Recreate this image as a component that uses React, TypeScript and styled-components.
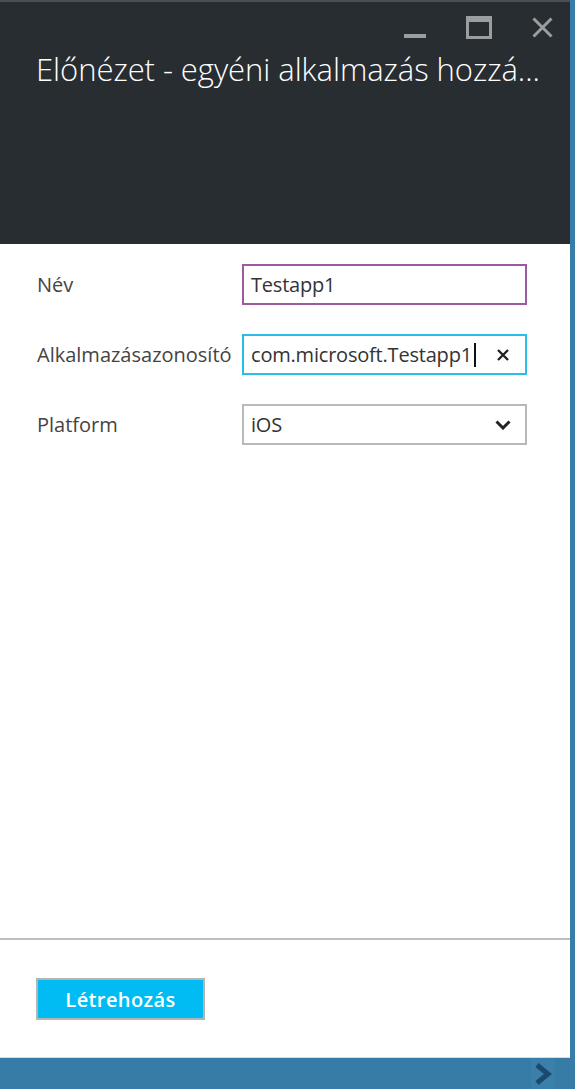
import React from 'react'
import styled, { createGlobalStyle } from 'styled-components'

const Global = createGlobalStyle`
  html, body { margin: 0; padding: 0; background: #ffffff; }
  body { font-family: "Open Sans", "Noto Sans", sans-serif; }
  * { box-sizing: border-box; }
`

const Page = styled.div`
  width: 575px;
  height: 1089px;
  display: flex;
  flex-direction: column;
  overflow: hidden;
`

const Main = styled.div`
  flex: 1;
  display: flex;
`

const Panel = styled.div`
  flex: 1;
  display: flex;
  flex-direction: column;
  background: #ffffff;
  border-bottom: 1px solid #d6dde2;
`

const Strip = styled.div`
  width: 5px;
  background: #377da7;
`

const Header = styled.div`
  height: 244px;
  background: #282d32;
  border-top: 2px solid #4a4f54;
  display: flex;
  flex-direction: column;
  padding: 13px 0 0 36px;
`

const WindowButtons = styled.div`
  display: flex;
  justify-content: flex-end;
  align-items: flex-end;
  gap: 40px;
  height: 24px;
  padding-right: 17px;
`

const Title = styled.h1`
  margin: 10px 0 0 0;
  font-family: "Open Sans", sans-serif;
  font-weight: 300;
  font-size: 31px;
  line-height: 40px;
  color: #ffffff;
  white-space: nowrap;
  letter-spacing: -0.05px;
`

const Form = styled.div`
  flex: 1;
  display: grid;
  grid-template-columns: 205px 285px;
  grid-auto-rows: 41px;
  row-gap: 29px;
  align-content: start;
  padding: 20px 0 0 37px;
`

const Label = styled.div`
  align-self: center;
  font-size: 20px;
  color: #444444;
  white-space: nowrap;
`

const Field = styled.div<{ $border: string }>`
  height: 41px;
  border: 2px solid ${p => p.$border};
  display: flex;
  align-items: center;
  padding: 0 0 0 7px;
  font-size: 20px;
  color: #333333;
  letter-spacing: -0.2px;
`

const Value = styled.span`
  flex: 1;
  display: flex;
  align-items: center;
  white-space: nowrap;
`

const Caret = styled.span`
  display: inline-block;
  width: 2px;
  height: 24px;
  background: #111111;
  margin-left: 2px;
`

const FieldIcon = styled.span`
  width: 44px;
  display: flex;
  align-items: center;
  justify-content: center;
`

const Separator = styled.div`
  height: 2px;
  background: #bdbdbd;
`

const Footer = styled.div`
  height: 117px;
  padding: 38px 0 0 36px;
`

const PrimaryButton = styled.button`
  width: 169px;
  height: 42px;
  border: 2px solid #b4b4b4;
  background: #00bcf2;
  color: #ffffff;
  font-family: "Open Sans", sans-serif;
  font-size: 20px;
  font-weight: 600;
  padding: 0;
  letter-spacing: 0.4px;
`

const BottomBar = styled.div`
  height: 31px;
  background: #367ca6;
  display: flex;
  justify-content: flex-end;
  align-items: center;
  padding-right: 20px;
`

const ChevronBox = styled.div`
  width: 24px;
  height: 31px;
  background: #3a80aa;
  display: flex;
  align-items: center;
  justify-content: center;
`

export default function App() {
  return (
    <Page>
      <Global />
      <Main>
        <Panel>
          <Header>
            <WindowButtons>
              <svg width="22" height="4" viewBox="0 0 22 4" style={{ marginBottom: 1 }}>
                <rect x="0" y="0" width="22" height="4" fill="#9b9ea0" />
              </svg>
              <svg width="26" height="23" viewBox="0 0 26 23">
                <rect x="0" y="0" width="26" height="23" fill="#9b9ea0" />
                <rect x="3" y="6" width="20" height="14" fill="#282d32" />
              </svg>
              <svg width="21" height="21" viewBox="0 0 21 21" style={{ marginBottom: 1 }}>
                <path d="M1.5 1.5 L19.5 19.5 M19.5 1.5 L1.5 19.5" stroke="#9b9ea0" strokeWidth="3" />
              </svg>
            </WindowButtons>
            <Title>Előnézet - egyéni alkalmazás hozzá...</Title>
          </Header>

          <Form>
            <Label>Név</Label>
            <Field $border="#9d5aa1">
              <Value>Testapp1</Value>
            </Field>

            <Label>Alkalmazásazonosító</Label>
            <Field $border="#2bbde9">
              <Value>
                com.microsoft.Testapp1
                <Caret />
              </Value>
              <FieldIcon>
                <svg width="12" height="12" viewBox="0 0 12 12">
                  <path d="M1 1 L11 11 M11 1 L1 11" stroke="#222" strokeWidth="2.4" />
                </svg>
              </FieldIcon>
            </Field>

            <Label>Platform</Label>
            <Field $border="#b9b9b9">
              <Value>iOS</Value>
              <FieldIcon>
                <svg width="16" height="10" viewBox="0 0 16 10">
                  <path d="M1.5 1.5 L8 8 L14.5 1.5" fill="none" stroke="#222" strokeWidth="3" />
                </svg>
              </FieldIcon>
            </Field>
          </Form>

          <Separator />
          <Footer>
            <PrimaryButton>Létrehozás</PrimaryButton>
          </Footer>
        </Panel>
        <Strip />
      </Main>
      <BottomBar>
        <ChevronBox>
          <svg width="18" height="22" viewBox="0 0 18 22">
            <path d="M3 2 L14 11 L3 20" fill="none" stroke="#1c4a6c" strokeWidth="5" />
          </svg>
        </ChevronBox>
      </BottomBar>
    </Page>
  )
}
